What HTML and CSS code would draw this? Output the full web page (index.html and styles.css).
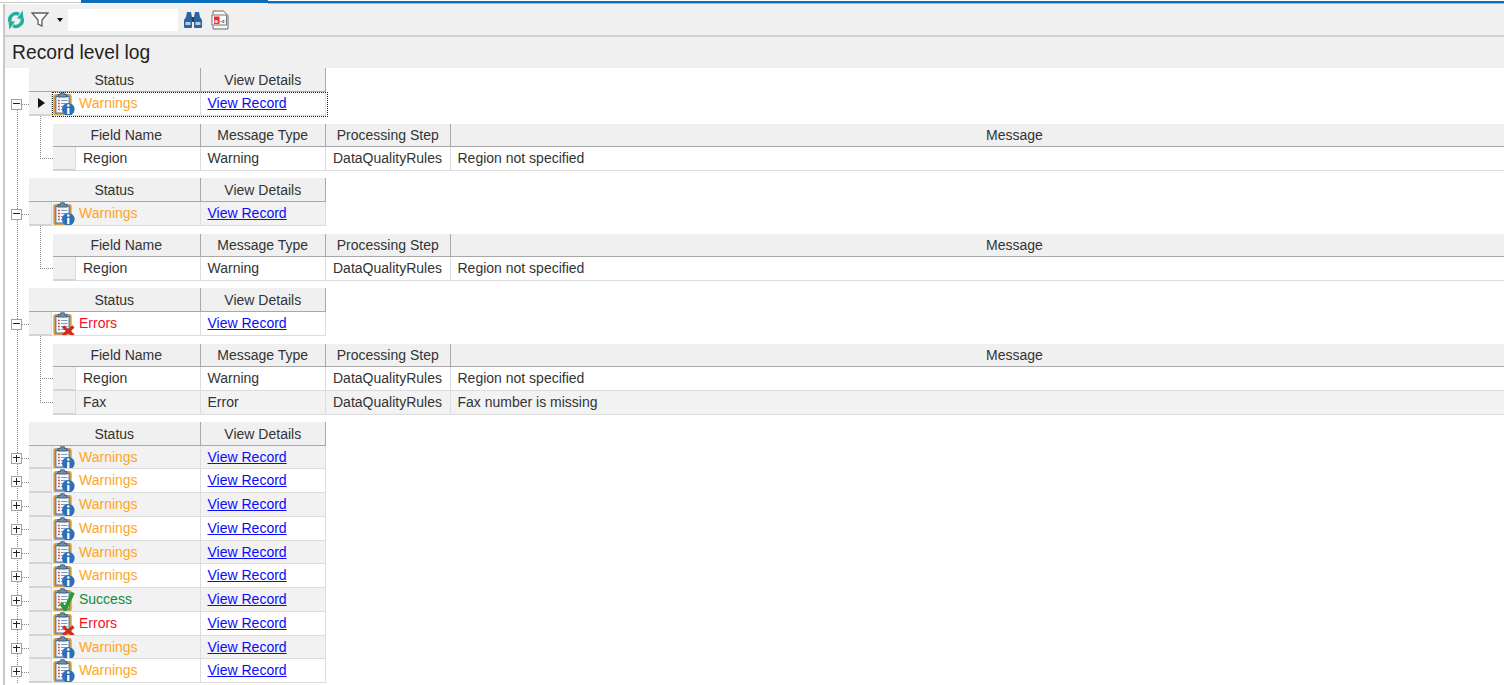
FILE: index.html
```html
<!DOCTYPE html>
<html lang="en">
<head>
<meta charset="utf-8">
<title>Record level log</title>
<link rel="stylesheet" href="styles.css">
</head>
<body>
<svg class="defs" width="0" height="0" aria-hidden="true">
  <symbol id="clip" viewBox="0 0 22 24">
    <rect x="1.2" y="3" width="16.6" height="19.6" rx="1.5" fill="#e9edf2" stroke="#d0a04a" stroke-width="1.8"/>
    <rect x="2.8" y="4.5" width="13.4" height="16.6" fill="#f8fafc" stroke="#3f73ad" stroke-width="1.2"/>
    <path d="M5 5V2.400h2.600V0.800h3.800v1.600H14V5z" fill="#6f8fae" stroke="#30506e" stroke-width=".8"/>
    <path d="M5 8.500h1.800M5 11.500h1.800M5 14.500h1.800M5 17.500h1.800" stroke="#d8443a" stroke-width="1.500"/>
    <path d="M8 8.500h6.500M8 11.500h6.500M8 14.500h6.500M8 17.500h6.500" stroke="#7d9dbf" stroke-width="1.200"/>
  </symbol>
  <symbol id="i-warn" viewBox="0 0 22 24">
    <use href="#clip" width="22" height="24"/>
    <circle cx="15.300" cy="17.300" r="6.300" fill="#2e70b8"/>
    <path d="M15.300 16v6" stroke="#fff" stroke-width="2.200"/>
    <circle cx="15.300" cy="13.500" r="1.300" fill="#fff"/>
  </symbol>
  <symbol id="i-err" viewBox="0 0 22 24">
    <use href="#clip" width="22" height="24"/>
    <path d="M10 14.500l10.500 9M20.500 14.500l-10.500 9" stroke="#d42a1c" stroke-width="3.200"/>
  </symbol>
  <symbol id="i-ok" viewBox="0 0 22 24">
    <use href="#clip" width="22" height="24"/>
    <path d="M8 15l4 6.500 8-17" fill="none" stroke="#2d9a2d" stroke-width="3.800"/>
  </symbol>
</svg>

<div class="tabline"><div class="tl-a"></div><div class="tl-b"></div><div class="tl-c"></div></div>

<main class="app">
  <div class="toolbar">
    <svg class="tb-refresh" viewBox="0 0 18 20" width="18" height="20" aria-hidden="true">
      <path d="M2.800 11.500A6.500 6.500 0 0 1 12 4.300" fill="none" stroke="#22b09f" stroke-width="3.400"/>
      <path d="M10 8.600l6.500.4L15.700.6z" fill="#22b09f"/>
      <path d="M15.200 8.500A6.500 6.500 0 0 1 6 15.700" fill="none" stroke="#22b09f" stroke-width="3.400"/>
      <path d="M8 11.400l-6.500-.4.800 8.400z" fill="#22b09f"/>
    </svg>
    <svg class="tb-filter" viewBox="0 0 18 15" width="18" height="15" aria-hidden="true">
      <path d="M1 1h16l-6 7v6l-4-2V8z" fill="#fbfbfb" stroke="#5b5f63" stroke-width="1.300"/>
    </svg>
    <span class="tb-caret"></span>
    <input class="tb-input" type="text" aria-label="Filter">
    <svg class="tb-bino" viewBox="0 0 20 18" width="20" height="18" aria-hidden="true">
      <path d="M3 6l1-5h4l1 5v10a1 1 0 0 1-1 1H2a1 1 0 0 1-1-1V9zM17 6l-1-5h-4l-1 5v10a1 1 0 0 0 1 1h6a1 1 0 0 0 1-1V9z" fill="#2f62a0"/>
      <path d="M9 6h2v5H9z" fill="#1f3f6c"/>
      <path d="M2.500 11h5v3h-5zM12.500 11h5v3h-5z" fill="#b4cde8"/>
    </svg>
    <svg class="tb-az" viewBox="0 0 18 20" width="18" height="20" aria-hidden="true">
      <path d="M2 4V1h10.500L17 5.500V19H2v-3" fill="#f6f6f6" stroke="#6d6d6d"/>
      <rect x="1" y="5" width="14.500" height="10" fill="#fafafa" stroke="#555" stroke-width=".8"/>
      <rect x="3" y="6.500" width="5.500" height="7.500" fill="#ee2b2b"/>
      <text x="3.600" y="12.500" class="az-a">a</text>
      <text x="8.800" y="12.500" class="az-z">-z</text>
    </svg>
  </div>

  <h1 class="title">Record level log</h1>

  <div class="grid">
    <section class="group">
      <div class="mhead"><div class="c-status">Status</div><div class="c-view">View Details</div></div>
      <div class="mrow focus white">
        <span class="exp"></span>
        <div class="rh"><span class="arrow"></span></div>
        <div class="c-st"><svg class="ico"><use href="#i-warn"/></svg><span class="warn">Warnings</span></div>
        <div class="c-vw"><a href="#">View Record</a></div>
      </div>
      <div class="details">
        <div class="dhead"><div class="d1">Field Name</div><div class="d2">Message Type</div><div class="d3">Processing Step</div><div class="d4"><span>Message</span></div></div>
        <div class="drow white"><div class="rh2"></div><div class="f1">Region</div><div class="f2">Warning</div><div class="f3">DataQualityRules</div><div class="f4">Region not specified</div></div>
      </div>
    </section>

    <section class="group">
      <div class="mhead"><div class="c-status">Status</div><div class="c-view">View Details</div></div>
      <div class="mrow grey">
        <span class="exp"></span>
        <div class="rh"></div>
        <div class="c-st"><svg class="ico"><use href="#i-warn"/></svg><span class="warn">Warnings</span></div>
        <div class="c-vw"><a href="#">View Record</a></div>
      </div>
      <div class="details">
        <div class="dhead"><div class="d1">Field Name</div><div class="d2">Message Type</div><div class="d3">Processing Step</div><div class="d4"><span>Message</span></div></div>
        <div class="drow white"><div class="rh2"></div><div class="f1">Region</div><div class="f2">Warning</div><div class="f3">DataQualityRules</div><div class="f4">Region not specified</div></div>
      </div>
    </section>

    <section class="group">
      <div class="mhead"><div class="c-status">Status</div><div class="c-view">View Details</div></div>
      <div class="mrow white">
        <span class="exp"></span>
        <div class="rh"></div>
        <div class="c-st"><svg class="ico"><use href="#i-err"/></svg><span class="err">Errors</span></div>
        <div class="c-vw"><a href="#">View Record</a></div>
      </div>
      <div class="details">
        <div class="dhead"><div class="d1">Field Name</div><div class="d2">Message Type</div><div class="d3">Processing Step</div><div class="d4"><span>Message</span></div></div>
        <div class="drow white"><div class="rh2"></div><div class="f1">Region</div><div class="f2">Warning</div><div class="f3">DataQualityRules</div><div class="f4">Region not specified</div></div>
        <div class="drow grey"><div class="rh2"></div><div class="f1">Fax</div><div class="f2">Error</div><div class="f3">DataQualityRules</div><div class="f4">Fax number is missing</div></div>
      </div>
    </section>

    <section class="group">
      <div class="mhead"><div class="c-status">Status</div><div class="c-view">View Details</div></div>
      <div class="mrow grey"><span class="exp plus"></span><div class="rh"></div><div class="c-st"><svg class="ico"><use href="#i-warn"/></svg><span class="warn">Warnings</span></div><div class="c-vw"><a href="#">View Record</a></div></div>
      <div class="mrow white"><span class="exp plus"></span><div class="rh"></div><div class="c-st"><svg class="ico"><use href="#i-warn"/></svg><span class="warn">Warnings</span></div><div class="c-vw"><a href="#">View Record</a></div></div>
      <div class="mrow grey"><span class="exp plus"></span><div class="rh"></div><div class="c-st"><svg class="ico"><use href="#i-warn"/></svg><span class="warn">Warnings</span></div><div class="c-vw"><a href="#">View Record</a></div></div>
      <div class="mrow white"><span class="exp plus"></span><div class="rh"></div><div class="c-st"><svg class="ico"><use href="#i-warn"/></svg><span class="warn">Warnings</span></div><div class="c-vw"><a href="#">View Record</a></div></div>
      <div class="mrow grey"><span class="exp plus"></span><div class="rh"></div><div class="c-st"><svg class="ico"><use href="#i-warn"/></svg><span class="warn">Warnings</span></div><div class="c-vw"><a href="#">View Record</a></div></div>
      <div class="mrow white"><span class="exp plus"></span><div class="rh"></div><div class="c-st"><svg class="ico"><use href="#i-warn"/></svg><span class="warn">Warnings</span></div><div class="c-vw"><a href="#">View Record</a></div></div>
      <div class="mrow grey"><span class="exp plus"></span><div class="rh"></div><div class="c-st"><svg class="ico"><use href="#i-ok"/></svg><span class="ok">Success</span></div><div class="c-vw"><a href="#">View Record</a></div></div>
      <div class="mrow white"><span class="exp plus"></span><div class="rh"></div><div class="c-st"><svg class="ico"><use href="#i-err"/></svg><span class="err">Errors</span></div><div class="c-vw"><a href="#">View Record</a></div></div>
      <div class="mrow grey"><span class="exp plus"></span><div class="rh"></div><div class="c-st"><svg class="ico"><use href="#i-warn"/></svg><span class="warn">Warnings</span></div><div class="c-vw"><a href="#">View Record</a></div></div>
      <div class="mrow white"><span class="exp plus"></span><div class="rh"></div><div class="c-st"><svg class="ico"><use href="#i-warn"/></svg><span class="warn">Warnings</span></div><div class="c-vw"><a href="#">View Record</a></div></div>
    </section>
  </div>
</main>
</body>
</html>
```

FILE: styles.css
```css
* { box-sizing: border-box; }
html, body { margin: 0; padding: 0; height: 100%; background: #fff; overflow: hidden; }
body { font-family: "Liberation Sans", Arial, sans-serif; font-size: 14px; color: #333; }
.defs { position: absolute; }

.tabline { display: flex; height: 4px; }
.tl-a { width: 81px; border-bottom: 1px solid #c9c9c9; margin-bottom: 1px; margin-top: 1px; }
.tl-b { width: 187px; background: #0a6ebd; height: 3px; }
.tl-c { flex: 1; border-top: 1px solid #fff; background: #0a6ebd; height: 4px; border-bottom: 1px solid #8fc0e8; }

.app { margin-left: 3px; border-left: 2px solid #c9c9c9; height: 681px; overflow: hidden; }

.toolbar { display: flex; align-items: center; height: 33px; padding-left: 2px; background: #f0f0f0; border-bottom: 2px solid #d0d0d0; }
.tb-refresh { margin-right: 6px; }
.tb-filter { margin-right: 8px; }
.tb-caret { width: 0; height: 0; border-left: 3.500px solid transparent; border-right: 3.500px solid transparent; border-top: 4px solid #111; margin-right: 5px; }
.tb-input { width: 110px; height: 22px; border: 0; background: #fff; padding: 0; margin-right: 5px; }
.tb-bino { margin-right: 8px; }
.az-a, .az-z { font-family: "Liberation Sans", sans-serif; font-size: 6px; font-weight: bold; }
.az-a { fill: #fff; }
.az-z { fill: #3c5c9c; }

.title { margin: 0; height: 31px; line-height: 32px; background: #f0f0f0; font-weight: normal; font-size: 19.300px; padding-left: 7px; color: #222; }

.grid { position: relative; background: #fff; }
.grid::before { content: ""; position: absolute; left: 12px; top: 40px; bottom: 0; border-left: 1px dotted #8a8a8a; }

.group { position: relative; margin-bottom: 7px; }

.mhead { display: flex; margin-left: 24px; height: 23.750px; }
.mhead > div, .dhead > div { background: #f0f0f0; border-right: 1px solid #a8a8a8; border-bottom: 1px solid #a8a8a8; text-align: center; white-space: nowrap; overflow: hidden; }
.mhead > div { line-height: 25px; }
.dhead > div { line-height: 23px; }
.c-status { width: 171.500px; }
.c-view { width: 125.500px; }

.mrow { position: relative; display: flex; height: 23.750px; margin-left: 24px; }
.mrow::before { content: ""; position: absolute; left: -7px; top: 12.500px; width: 7px; border-top: 1px dotted #8a8a8a; }
.exp { position: absolute; left: -18px; top: 7px; width: 11px; height: 11px; background: #fff; border: 1px solid #a0a0a0; z-index: 1; }
.exp::before { content: ""; position: absolute; left: 1px; right: 1px; top: 3.500px; height: 1px; background: #222; }
.exp.plus::after { content: ""; position: absolute; top: 1px; bottom: 1px; left: 3.500px; width: 1px; background: #222; }

.rh, .rh2 { flex: none; background: #f0f0f0; border-right: 1px solid #dcdcdc; border-bottom: 2px solid #d4d4d4; display: flex; align-items: center; justify-content: center; }
.rh { width: 23px; }
.rh2 { width: 23px; }
.arrow { width: 0; height: 0; border-top: 5.500px solid transparent; border-bottom: 5.500px solid transparent; border-left: 7px solid #111; margin-left: 3px; margin-top: 1px; }

.c-st, .c-vw, .f1, .f2, .f3, .f4 { border-right: 1px solid #dcdcdc; border-bottom: 1px solid #dcdcdc; white-space: nowrap; overflow: hidden; line-height: 23px; }
.c-st { width: 148.500px; display: flex; align-items: flex-start; }
.c-vw { width: 125.500px; padding-left: 7px; }
.ico { width: 22px; height: 24px; flex: none; margin: 0 4px 0 1px; }
.white > .c-st, .white > .c-vw, .drow.white > div:not(.rh2) { background: #fff; }
.grey > .c-st, .grey > .c-vw, .drow.grey > div:not(.rh2) { background: #f2f2f2; }
.warn { color: #ffa51f; }
.err { color: #f5102a; }
.ok { color: #118a3c; }
a { color: #0a0aff; text-decoration: underline; }

.focus::after { content: ""; position: absolute; left: 23px; top: 0; width: 274px; height: 23px; border: 1px dotted #222; pointer-events: none; }

.details { position: relative; margin: 8px 0 0 48px; }
.details::before { content: ""; position: absolute; left: -13px; top: -8px; bottom: 12px; border-left: 1px dotted #8a8a8a; }
.dhead { display: flex; height: 23.750px; }
.d1 { width: 147.500px; flex: none; }
.d2 { width: 125.500px; flex: none; }
.d3 { width: 124.500px; flex: none; }
.d4 { width: 1128px; flex: none; border-right: 0 !important; }
.drow { position: relative; display: flex; height: 23.750px; }
.drow::before { content: ""; position: absolute; left: -13px; top: 11px; width: 13px; border-top: 1px dotted #8a8a8a; }
.f1 { width: 124.500px; padding-left: 7px; flex: none; }
.f2 { width: 125.500px; padding-left: 7px; flex: none; }
.f3 { width: 124.500px; padding-left: 7px; flex: none; }
.f4 { width: 1128px; flex: none; padding-left: 7px; border-right: 0; }
```
